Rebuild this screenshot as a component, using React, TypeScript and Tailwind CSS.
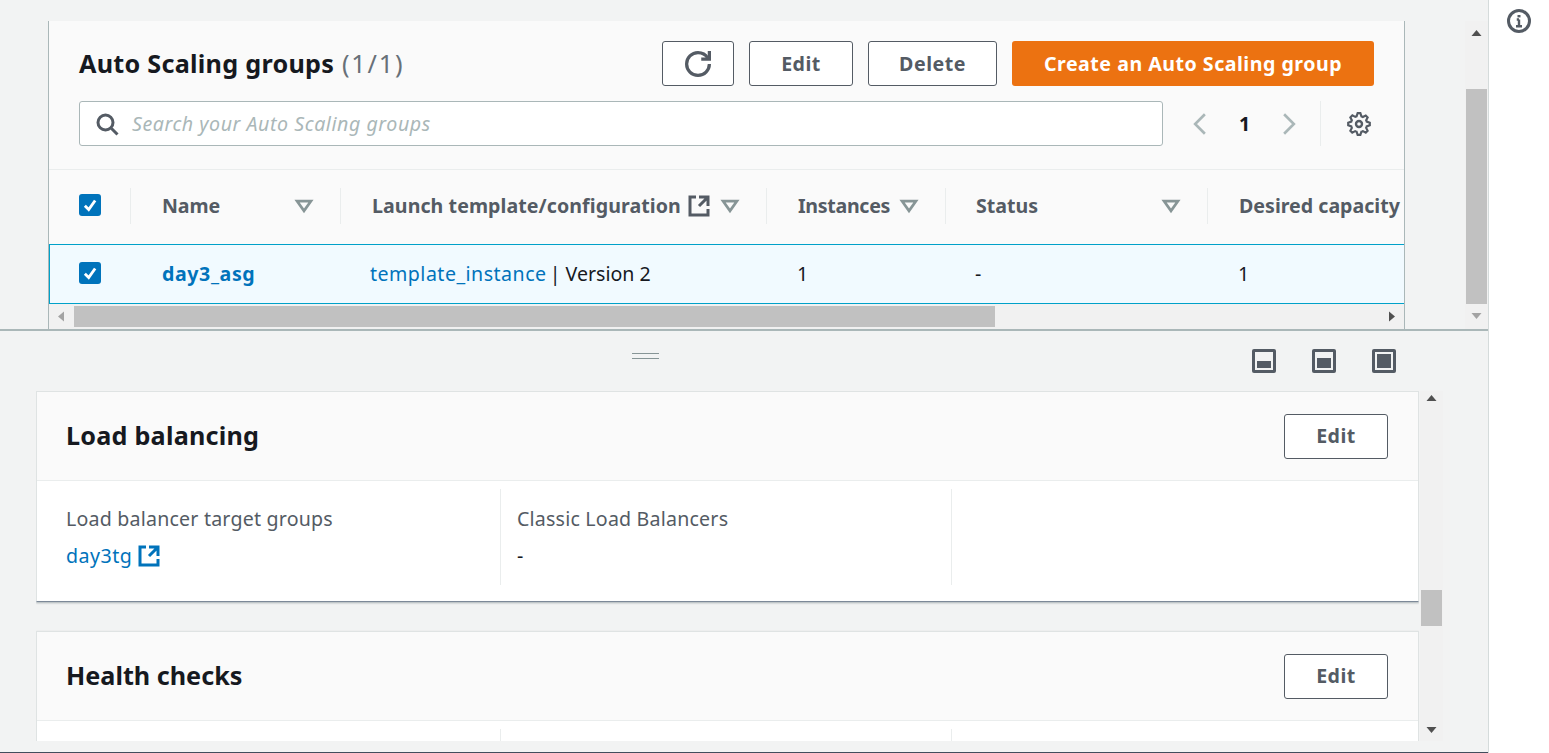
import { ReactNode } from "react";

function ExternalIcon({ className }: { className: string }) {
  return (
    <svg viewBox="0 0 16 16" fill="none" stroke="currentColor" strokeWidth="2" className={className}>
      <path d="M14 8.01v-6H8M14.02 2 8 8.01M6 2.01H2v12h12V10" />
    </svg>
  );
}

function SortIcon() {
  return (
    <svg viewBox="0 0 16 16" className="w-[22px] h-[22px] text-[#879596] shrink-0" fill="none" stroke="currentColor" strokeWidth="2">
      <path d="M3 4.5h10L8 11.5z" strokeLinejoin="miter" />
    </svg>
  );
}

function Checkbox() {
  return (
    <div className="w-[22px] h-[22px] rounded-[3px] bg-[#0073bb] flex items-center justify-center">
      <svg viewBox="0 0 14 14" className="w-[18px] h-[18px]" fill="none" stroke="#fff" strokeWidth="2.2">
        <path d="M3 7.5 6 10.5 11 3.5" />
      </svg>
    </div>
  );
}

function Btn({ children, className }: { children: ReactNode; className: string }) {
  return (
    <button className={"h-[45px] rounded-[3px] border border-[#545b64] bg-white text-[#545b64] text-[19.6px] tracking-[0.5px] font-bold flex items-center justify-center " + className}>
      {children}
    </button>
  );
}

function Th({ label, className, sort, ext, track }: { label: string; className: string; sort?: boolean; ext?: boolean; track?: string }) {
  return (
    <div className={"h-[36px] flex items-center justify-between shrink-0 border-r border-[#eaeded] pl-[31px] pr-[25px] " + className}>
      <div className={"flex items-center gap-[6px] whitespace-nowrap text-[19.6px] font-bold text-[#545b64] " + (track ?? "")}>
        {label}
        {ext && <ExternalIcon className="w-[24px] h-[24px]" />}
      </div>
      {sort && <SortIcon />}
    </div>
  );
}

function PanelIcon({ inner }: { inner: string }) {
  return (
    <div className="w-[24px] h-[24px] rounded-[2px] bg-[#545b64] p-[3px] flex">
      <div className="flex-1 bg-[#f2f3f3] p-[2px] flex items-end">
        <div className={"w-full bg-[#545b64] " + inner} />
      </div>
    </div>
  );
}

function ScrollArrow({ dir, muted }: { dir: "up" | "down" | "left" | "right"; muted?: boolean }) {
  const points = {
    up: "5,1 0,7 10,7",
    down: "0,1 10,1 5,7",
    left: "7,0 7,10 1,5",
    right: "1,0 1,10 7,5",
  }[dir];
  return (
    <svg viewBox={dir === "up" || dir === "down" ? "0 0 10 8" : "0 0 8 10"} className={dir === "up" || dir === "down" ? "w-[11px] h-[8px]" : "w-[8px] h-[11px]"}>
      <polygon points={points} fill={muted ? "#a3a3a3" : "#505050"} />
    </svg>
  );
}

function Section({ title, track, children }: { title: string; track: string; children: ReactNode }) {
  return (
    <div className="bg-white border-t border-l border-r border-[#dfe3e3] border-b border-b-[#7d8998] shadow-[0_1px_2px_rgba(0,28,36,0.3)] shrink-0">
      <div className="h-[89px] bg-[#fafafa] border-b border-[#eaeded] flex items-center justify-between pl-[29px] pr-[30px]">
        <h2 className={"text-[25.2px] font-bold text-[#16191f] " + track}>{title}</h2>
        <Btn className="w-[104px]">Edit</Btn>
      </div>
      {children}
    </div>
  );
}

function InfoCol({ label, children, className }: { label?: string; children?: ReactNode; className: string }) {
  return (
    <div className={"h-[96px] pt-[17px] shrink-0 " + className}>
      {label && <div className="text-[19.6px] tracking-[0.2px] leading-[26px] text-[#545b64]">{label}</div>}
      <div className="mt-[11px] text-[19.6px] leading-[26px] text-[#16191f]">{children}</div>
    </div>
  );
}

export default function App() {
  return (
    <div className="w-[1549px] h-[753px] overflow-hidden flex bg-white font-['Noto_Sans',sans-serif]">
      <div className="w-[1489px] h-[753px] shrink-0 bg-[#f2f3f3] border-r border-[#d5dbdb] flex flex-col">
        {/* top split pane */}
        <div className="h-[331px] shrink-0 border-b-2 border-[#aab7b8] flex pl-[48px]">
          <div className="w-[1357px] mt-[21px] shrink-0 border-l border-r border-[#aab7b8] bg-[#fafafa] flex flex-col">
            <div className="px-[30px] pt-[20px] h-[149px] border-b border-[#eaeded]">
              <div className="flex items-center justify-between">
                <h1 className="text-[25.2px] tracking-[0.26px] font-bold text-[#16191f] whitespace-nowrap">
                  Auto Scaling groups <span className="font-normal tracking-[1.8px] ml-px text-[#687078]">(1/1)</span>
                </h1>
                <div className="flex items-center">
                  <Btn className="w-[72px]">
                    <svg viewBox="0 0 16 16" className="w-[26px] h-[26px]" fill="none" stroke="currentColor" strokeWidth="2">
                      <path d="M10 5h5V0" />
                      <path d="M15 8a6.99 6.99 0 0 1-7 7 6.99 6.99 0 0 1-7-7 6.99 6.99 0 0 1 7-7c2.49 0 4.8 1.3 6 3.3" />
                    </svg>
                  </Btn>
                  <Btn className="w-[104px] ml-[15px]">Edit</Btn>
                  <Btn className="w-[129px] ml-[15px]">Delete</Btn>
                  <button className="w-[362px] h-[45px] ml-[15px] rounded-[3px] bg-[#ec7211] text-white text-[19.6px] tracking-[0.5px] font-bold whitespace-nowrap">
                    Create an Auto Scaling group
                  </button>
                </div>
              </div>
              <div className="flex items-center mt-[15px]">
                <div className="w-[1084px] h-[45px] bg-white border border-[#aab7b8] rounded-[3px] flex items-center pl-[15px] gap-[13px]">
                  <svg viewBox="0 0 16 16" className="w-[24px] h-[24px] text-[#545b64]" fill="none" stroke="currentColor" strokeWidth="2">
                    <path d="m11 11 4 4" />
                    <circle cx="7" cy="7" r="5" />
                  </svg>
                  <span className="italic text-[19.6px] tracking-[0.55px] text-[#aab7b8]">Search your Auto Scaling groups</span>
                </div>
                <svg viewBox="0 0 16 16" className="w-[26px] h-[26px] ml-[24px] text-[#aab7b8]" fill="none" stroke="currentColor" strokeWidth="1.6">
                  <path d="M11 2 5 8l6 6" />
                </svg>
                <span className="w-[63px] text-center text-[19.6px] font-bold text-[#16191f]">1</span>
                <svg viewBox="0 0 16 16" className="w-[26px] h-[26px] text-[#aab7b8]" fill="none" stroke="currentColor" strokeWidth="1.6">
                  <path d="m5 2 6 6-6 6" />
                </svg>
                <div className="h-[45px] ml-[18px] border-l border-[#eaeded] pl-[26px] flex items-center">
                  <svg viewBox="0 0 16 16" className="w-[24px] h-[24px] text-[#545b64]" fill="none" stroke="currentColor" strokeWidth="1.6">
                    <path d="M13.3 5.2l1.1-2.1L13 1.7l-2.1 1.1c-.3-.2-.7-.3-1.1-.4L9 0H7l-.8 2.3c-.3.1-.7.2-1 .4L3.1 1.6 1.6 3.1l1.1 2.1c-.2.3-.3.7-.4 1L0 7v2l2.3.8c.1.4.3.7.4 1.1l-1.1 2.1 1.4 1.4 2.1-1.1c.3.2.7.3 1.1.4L7 16h2l.8-2.3c.4-.1.7-.3 1.1-.4l2.1 1.1 1.4-1.4-1.1-2.1c.2-.3.3-.7.4-1.1L16 9V7l-2.3-.8c-.1-.3-.2-.7-.4-1z" transform="translate(.8 .8) scale(.9)" />
                    <circle cx="8" cy="8" r="2" />
                  </svg>
                </div>
              </div>
            </div>
            <div className="h-[74px] pb-[2px] flex items-center overflow-hidden">
              <div className="w-[82px] h-[36px] pl-[30px] border-r border-[#eaeded] flex items-center shrink-0">
                <div className="-mt-[3px]">
                  <Checkbox />
                </div>
              </div>
              <Th label="Name" sort className="w-[210px]" track="-tracking-[0.1px]" />
              <Th label="Launch template/configuration" sort ext className="w-[426px]" track="tracking-[0.07px]" />
              <Th label="Instances" sort className="w-[179px]" track="-tracking-[0.3px]" />
              <div className="h-[36px] w-[262px] shrink-0 border-r border-[#eaeded] pl-[30px] pr-[25px] flex items-center justify-between text-[19.6px] font-bold text-[#545b64]">
                Status
                <SortIcon />
              </div>
              <div className="pl-[31px] whitespace-nowrap text-[19.6px] font-bold text-[#545b64]">Desired capacity</div>
            </div>
            <div className="h-[60px] bg-[#f1faff] border-y border-l border-[#00a1c9] flex items-center text-[19.6px] text-[#16191f] whitespace-nowrap">
              <div className="w-[112px] pl-[29px] shrink-0">
                <div className="-mt-[2px]">
                  <Checkbox />
                </div>
              </div>
              <div className="w-[208px] font-bold tracking-[0.6px] text-[#0073bb] shrink-0">day3_asg</div>
              <div className="w-[427px] shrink-0">
                <span className="text-[#0073bb] tracking-[0.47px] mr-[-2px]">template_instance</span> | Version 2
              </div>
              <div className="w-[178px] shrink-0">1</div>
              <div className="w-[263px] shrink-0">-</div>
              <div>1</div>
            </div>
            <div className="flex-1 bg-[#f1f1f1] flex items-center pl-[8px] pr-[8px]">
              <ScrollArrow dir="left" muted />
              <div className="w-[921px] h-[21px] ml-[9px] bg-[#c1c1c1]" />
              <div className="flex-1" />
              <ScrollArrow dir="right" />
            </div>
          </div>
          {/* vertical scrollbar */}
          <div className="w-[23px] mt-[21px] ml-[60px] shrink-0 bg-[#f1f1f1] flex flex-col items-center">
            <div className="h-[68px] flex items-start pt-[8px]">
              <ScrollArrow dir="up" />
            </div>
            <div className="w-[21px] h-[215px] bg-[#c1c1c1]" />
            <div className="mt-[8px]">
              <ScrollArrow dir="down" muted />
            </div>
          </div>
        </div>
        {/* handle row */}
        <div className="h-[60px] shrink-0 relative flex items-center justify-end gap-[36px] pr-[92px]">
          <div className="absolute left-[632px] top-[22px] w-[27px] h-[6px] border-y border-[#879596]" />
          <PanelIcon inner="h-[7px]" />
          <PanelIcon inner="h-[10px]" />
          <PanelIcon inner="h-[14px]" />
        </div>
        {/* bottom split pane */}
        <div className="h-[350px] shrink-0 flex pl-[36px] overflow-hidden">
          <div className="w-[1383px] shrink-0 flex flex-col gap-[29px] overflow-hidden">
            <Section title="Load balancing" track="tracking-[0.22px]">
              <div className="flex pt-[8px] pb-[16px]">
                <InfoCol label="Load balancer target groups" className="w-[464px] pl-[29px] border-r border-[#eaeded]">
                  <span className="inline-flex items-center gap-[5px] tracking-[0.5px] text-[#0073bb]">
                    day3tg
                    <ExternalIcon className="w-[24px] h-[24px]" />
                  </span>
                </InfoCol>
                <InfoCol label="Classic Load Balancers" className="w-[451px] pl-[16px] border-r border-[#eaeded]">-</InfoCol>
                <InfoCol className="w-[451px]" />
              </div>
            </Section>
            <Section title="Health checks" track="tracking-normal">
              <div className="flex pt-[8px]">
                <InfoCol className="w-[464px] border-r border-[#eaeded]" />
                <InfoCol className="w-[451px] border-r border-[#eaeded]" />
                <InfoCol className="w-[451px]" />
              </div>
            </Section>
          </div>
          <div className="w-[23px] h-[350px] ml-px shrink-0 bg-[#f1f1f1] flex flex-col items-center">
            <div className="h-[199px] pt-[3px]">
              <ScrollArrow dir="up" />
            </div>
            <div className="w-[21px] h-[36px] bg-[#c1c1c1]" />
            <div className="mt-[100px]">
              <ScrollArrow dir="down" />
            </div>
          </div>
        </div>
        <div className="flex-1 border-b border-[#414d5c]" />
      </div>
      {/* right rail */}
      <div className="flex-1 flex justify-center pt-[9px]">
        <svg viewBox="0 0 16 16" className="w-[24px] h-[24px] text-[#545b64]" fill="none" stroke="currentColor" strokeWidth="2">
          <circle cx="8" cy="8" r="7" />
          <path d="M8 7v4.5M6 11.5h4M6.5 7H8" strokeWidth="1.6" />
          <path d="M7 4h2v1.6H7z" fill="currentColor" stroke="none" />
        </svg>
      </div>
    </div>
  );
}
